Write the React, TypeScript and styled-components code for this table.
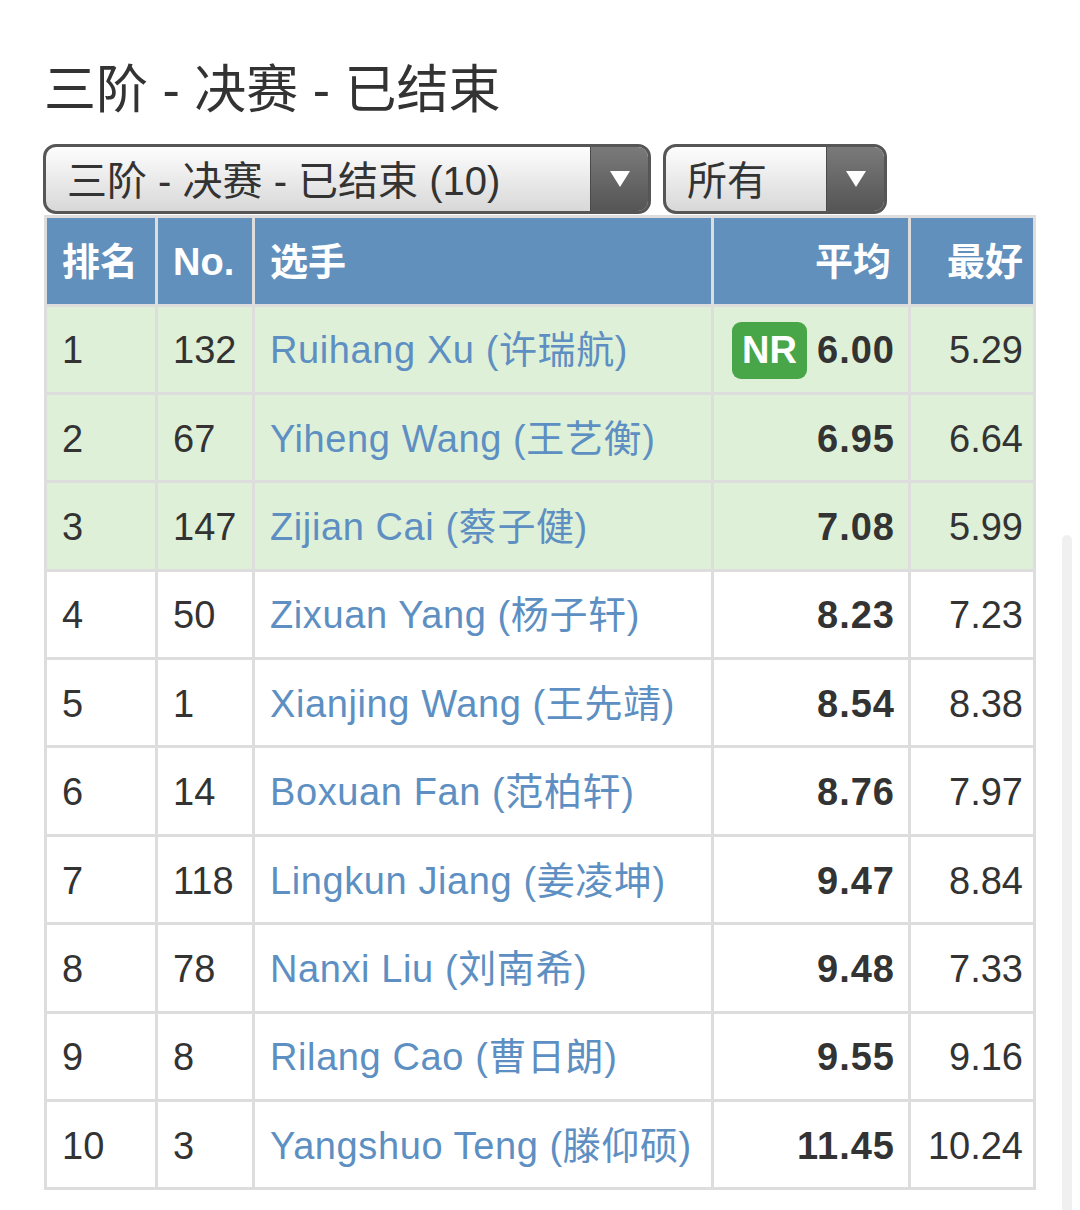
import React from "react";
import styled, { createGlobalStyle } from "styled-components";

const GlobalStyle = createGlobalStyle`
  html, body {
    margin: 0;
    padding: 0;
    background: #ffffff;
  }
  body {
    font-family: "Liberation Sans", "Noto Sans CJK SC", Arial, sans-serif;
    color: #333333;
  }
`;

const Page = styled.div`
  padding: 60px 0 20px 44px;
  display: flex;
  flex-direction: column;
  align-items: flex-start;
`;

const Title = styled.h1`
  margin: 0 0 24px 0;
  font-size: 52px;
  line-height: 60px;
  height: 60px;
  font-weight: 400;
  color: #333333;
  font-family: "Liberation Sans", "Noto Sans CJK SC", sans-serif;
`;

const SelectRow = styled.div`
  display: flex;
  gap: 12px;
  margin-left: -1px;
  margin-bottom: 1px;
`;

const SelectBox = styled.div<{ $width: number }>`
  box-sizing: border-box;
  width: ${(p) => p.$width}px;
  height: 70px;
  border: 3px solid #565656;
  border-radius: 13px;
  overflow: hidden;
  display: flex;
  align-items: stretch;
  background: linear-gradient(#fdfdfd, #d8d8d8);
`;

const SelectLabel = styled.div`
  flex: 1;
  display: flex;
  align-items: center;
  padding: 3px 0 0 21px;
  font-size: 40px;
  line-height: 48px;
  color: #333333;
  white-space: nowrap;
  overflow: hidden;
`;

const SelectArrow = styled.div`
  width: 57px;
  border-left: 1px solid #4a4a4a;
  background: linear-gradient(#7a7a7a, #555555);
  display: flex;
  align-items: center;
  justify-content: center;
`;

const Triangle = styled.span`
  width: 0;
  height: 0;
  border-left: 10px solid transparent;
  border-right: 10px solid transparent;
  border-top: 16px solid #ffffff;
`;

const Table = styled.table`
  table-layout: fixed;
  width: 992px;
  border-collapse: separate;
  border-spacing: 0;
  border-top: 3px solid #dddddd;
  border-left: 3px solid #dddddd;
  box-sizing: border-box;
  font-size: 38px;
  line-height: 46px;
`;

const HeadCell = styled.th<{ $align?: "left" | "right"; $padRight?: number }>`
  box-sizing: border-box;
  height: 88.5px;
  padding: 2px ${(p) => p.$padRight ?? 15}px 0 15px;
  background: #6190bd;
  color: #ffffff;
  font-weight: 700;
  text-align: ${(p) => p.$align ?? "left"};
  border-right: 3px solid #dddddd;
  border-bottom: 3px solid #dddddd;
  white-space: nowrap;
`;

const Row = styled.tr<{ $highlight: boolean }>`
  background: ${(p) => (p.$highlight ? "#dff0d8" : "#ffffff")};
`;

const Cell = styled.td<{ $align?: "left" | "right"; $bold?: boolean; $padRight?: number }>`
  box-sizing: border-box;
  height: 88.4px;
  padding: 2px ${(p) => p.$padRight ?? 15}px 0 15px;
  text-align: ${(p) => p.$align ?? "left"};
  font-weight: ${(p) => (p.$bold ? 700 : 400)};
  letter-spacing: ${(p) => (p.$bold ? "1px" : "0")};
  color: #333333;
  border-right: 3px solid #dddddd;
  border-bottom: 3px solid #dddddd;
  white-space: nowrap;
  vertical-align: middle;
`;

const NameLink = styled.a`
  color: #5d8fc2;
  text-decoration: none;
  letter-spacing: 0.6px;
`;

const AvgWrap = styled.span`
  display: inline-flex;
  align-items: center;
  gap: 10px;
  vertical-align: middle;
`;

const RecordBadge = styled.span`
  display: inline-flex;
  align-items: center;
  justify-content: center;
  width: 75px;
  height: 57px;
  border-radius: 9px;
  background: #48a648;
  color: #ffffff;
  font-weight: 700;
  font-size: 38px;
  letter-spacing: 0;
`;

const ScrollIndicator = styled.div`
  position: fixed;
  right: 8px;
  top: 535px;
  width: 10px;
  height: 700px;
  border-radius: 5px;
  background: #f0f0f0;
`;

type Result = {
  rank: number;
  no: number;
  name: string;
  avg: string;
  best: string;
  record?: string;
};

const results: Result[] = [
  { rank: 1, no: 132, name: "Ruihang Xu (许瑞航)", avg: "6.00", best: "5.29", record: "NR" },
  { rank: 2, no: 67, name: "Yiheng Wang (王艺衡)", avg: "6.95", best: "6.64" },
  { rank: 3, no: 147, name: "Zijian Cai (蔡子健)", avg: "7.08", best: "5.99" },
  { rank: 4, no: 50, name: "Zixuan Yang (杨子轩)", avg: "8.23", best: "7.23" },
  { rank: 5, no: 1, name: "Xianjing Wang (王先靖)", avg: "8.54", best: "8.38" },
  { rank: 6, no: 14, name: "Boxuan Fan (范柏轩)", avg: "8.76", best: "7.97" },
  { rank: 7, no: 118, name: "Lingkun Jiang (姜凌坤)", avg: "9.47", best: "8.84" },
  { rank: 8, no: 78, name: "Nanxi Liu (刘南希)", avg: "9.48", best: "7.33" },
  { rank: 9, no: 8, name: "Rilang Cao (曹日朗)", avg: "9.55", best: "9.16" },
  { rank: 10, no: 3, name: "Yangshuo Teng (滕仰硕)", avg: "11.45", best: "10.24" },
];

const Select: React.FC<{ width: number; label: string }> = ({ width, label }) => (
  <SelectBox $width={width}>
    <SelectLabel>{label}</SelectLabel>
    <SelectArrow>
      <Triangle />
    </SelectArrow>
  </SelectBox>
);

export default function App() {
  return (
    <>
      <GlobalStyle />
      <Page>
        <Title>三阶 - 决赛 - 已结束</Title>
        <SelectRow>
          <Select width={608} label="三阶 - 决赛 - 已结束 (10)" />
          <Select width={224} label="所有" />
        </SelectRow>
        <Table>
          <colgroup>
            <col style={{ width: 111 }} />
            <col style={{ width: 97 }} />
            <col style={{ width: 459 }} />
            <col style={{ width: 197 }} />
            <col style={{ width: 125 }} />
          </colgroup>
          <thead>
            <tr>
              <HeadCell>排名</HeadCell>
              <HeadCell>No.</HeadCell>
              <HeadCell>选手</HeadCell>
              <HeadCell $align="right" $padRight={17}>平均</HeadCell>
              <HeadCell $align="right" $padRight={10}>最好</HeadCell>
            </tr>
          </thead>
          <tbody>
            {results.map((r) => (
              <Row key={r.rank} $highlight={r.rank <= 3}>
                <Cell>{r.rank}</Cell>
                <Cell>{r.no}</Cell>
                <Cell>
                  <NameLink href="#">{r.name}</NameLink>
                </Cell>
                <Cell $align="right" $bold $padRight={13}>
                  {r.record ? (
                    <AvgWrap>
                      <RecordBadge>{r.record}</RecordBadge>
                      {r.avg}
                    </AvgWrap>
                  ) : (
                    r.avg
                  )}
                </Cell>
                <Cell $align="right" $padRight={10}>{r.best}</Cell>
              </Row>
            ))}
          </tbody>
        </Table>
      </Page>
      <ScrollIndicator />
    </>
  );
}
